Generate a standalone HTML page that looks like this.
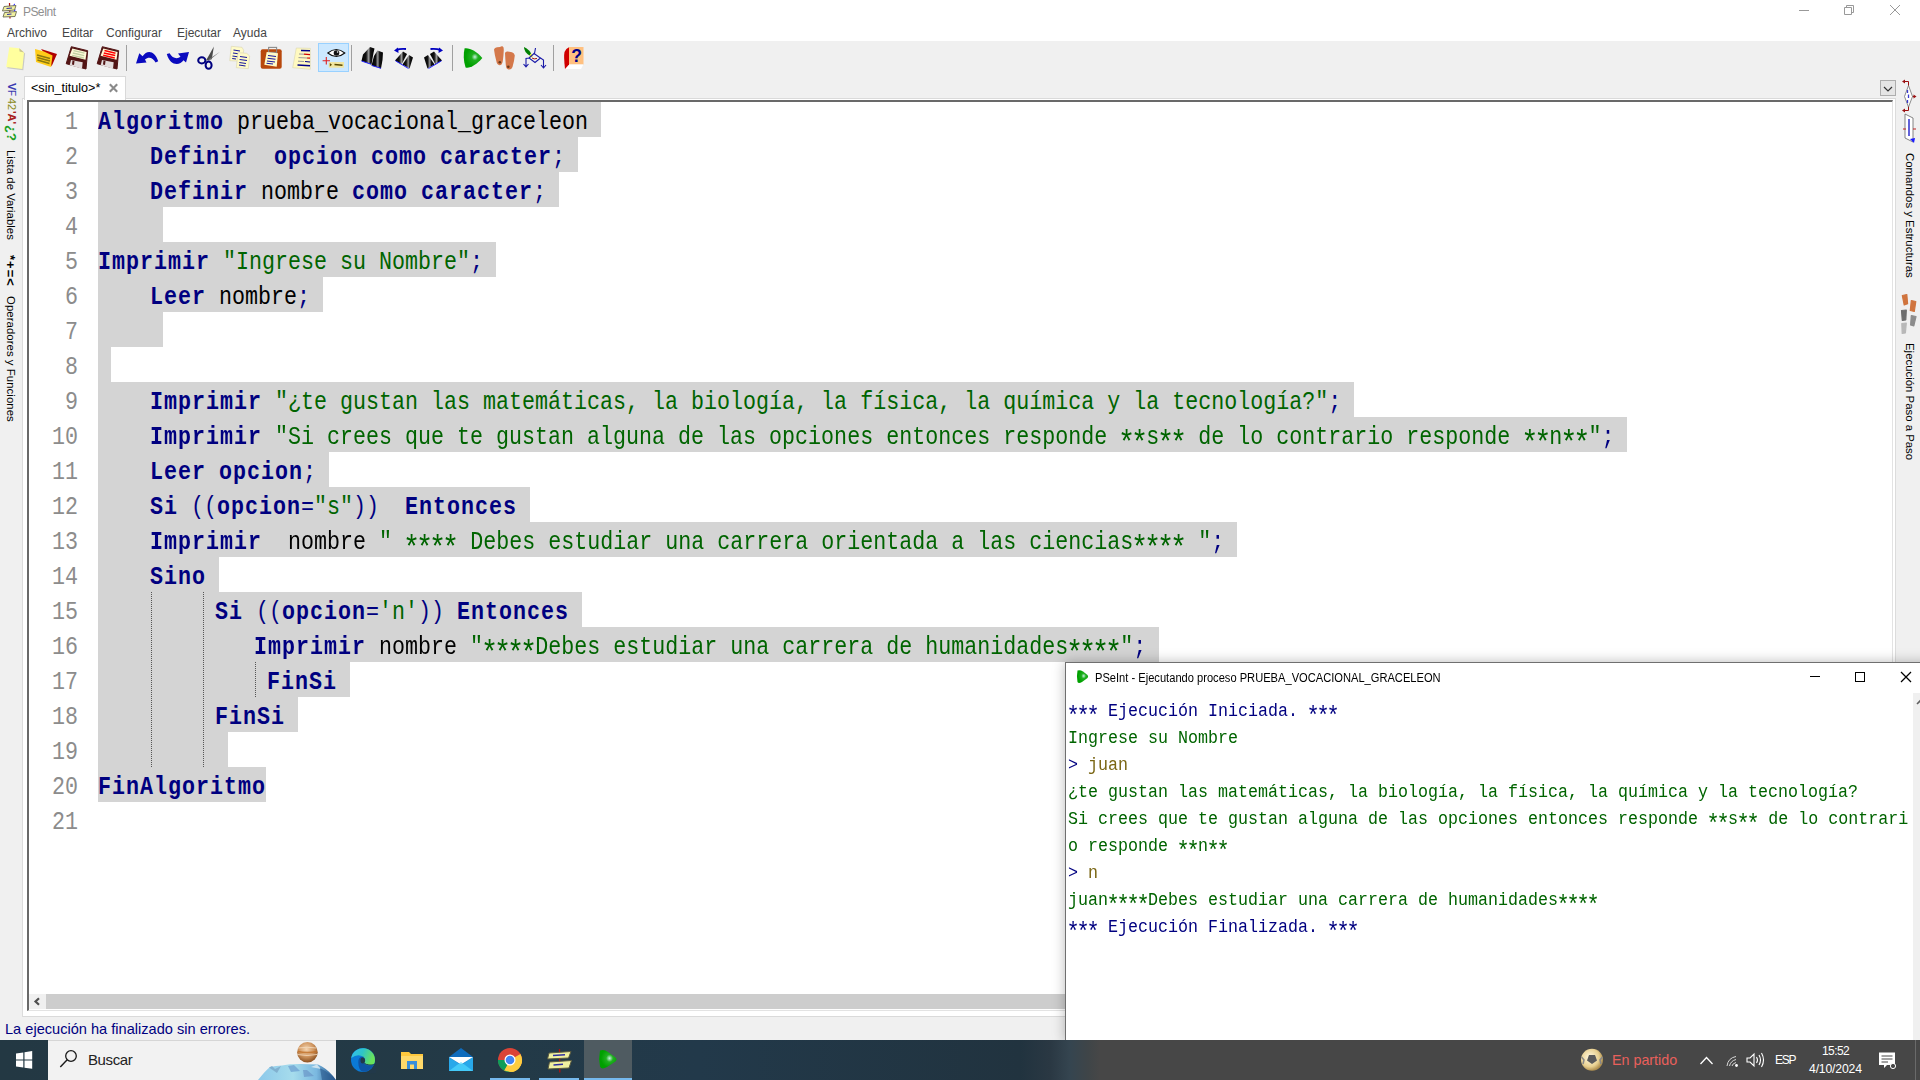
<!DOCTYPE html>
<html><head><meta charset="utf-8"><title>PSeInt</title>
<style>
*{box-sizing:border-box}
html,body{margin:0;padding:0}
body{width:1920px;height:1080px;overflow:hidden;position:relative;background:#f0f0f0;font-family:"Liberation Sans",sans-serif}
.a{position:absolute}
#titlebar{left:0;top:0;width:1920px;height:41px;background:#fff}
.ttl{font-size:12px;color:#8f8f8f;left:23px;top:5px;line-height:14px;letter-spacing:-0.6px}
.menu{font-size:12px;color:#454545;top:26px;line-height:14px}
#toolbar{left:0;top:41px;width:1920px;height:35px;background:#f0f0f0}
.sep{width:1px;height:26px;top:45px;background:#a0a0a0}
/* notebook */
#page{left:22px;top:98px;width:1874px;height:919px;background:#fff;border:1px solid #dadada}
#tab{left:24px;top:76px;width:102px;height:24px;background:#fff;border:1px solid #d9d9d9;border-bottom:none}
#editor{left:27px;top:100px;width:1866px;height:911px;background:#fff;border-top:2px solid #696969;border-left:2px solid #696969;border-right:1px solid #e3e3e3;border-bottom:1px solid #e3e3e3;overflow:hidden}
.sel{position:absolute;left:98px;height:35px;background:#d4d4d4}
.ln{position:absolute;left:29px;width:49px;text-align:right;height:35px;font-family:"Liberation Mono",monospace;font-size:25.0px;line-height:35px;color:#8c8c8c;transform:scaleX(0.86667);transform-origin:right top;padding-top:3px;white-space:pre}
.cl{position:absolute;height:35px;font-family:"Liberation Mono",monospace;font-size:25.0px;line-height:35px;white-space:pre;transform:scaleX(0.86667);transform-origin:left top;padding-top:3px}
.kw{color:#000080;font-weight:bold;letter-spacing:1.1538px}
.id{color:#000}
.st{color:#006400}
.op{color:#000080}
.vt{position:absolute;writing-mode:vertical-rl;white-space:nowrap;line-height:14px;font-family:"Liberation Sans",sans-serif}
.ast{font-size:33px;letter-spacing:-4.8px;position:relative;top:8.8px;left:-2.5px;line-height:0}
.cast{font-size:25px;letter-spacing:-3.6px;position:relative;top:7.8px;left:-1.8px;line-height:0}
.guide{position:absolute;width:1px;background:repeating-linear-gradient(to bottom,#555 0,#555 1px,transparent 1px,transparent 2px)}
/* console */
#con{left:1065px;top:662px;width:870px;height:380px;background:#fff;border:1px solid #6f6f6f;box-shadow:0 0 12px rgba(0,0,0,.28)}
.cn{position:absolute;left:1067.6px;height:27px;font-family:"Liberation Mono",monospace;font-size:19.0px;line-height:27px;white-space:pre;transform:scaleX(0.87719);transform-origin:left top}
#taskbar{left:0;top:1040px;width:1920px;height:40px;background:linear-gradient(to right,#233843 0,#233a47 500px,#22394a 700px,#21333f 1020px,#2a3843 1050px,#354550 1070px,#3f4548 1088px,#474747 1100px,#474747 100%)}
</style></head><body>
<div id="titlebar" class="a"></div>
<div class="a ttl">PSeInt</div>
<div class="a menu" style="left:7px">Archivo</div>
<div class="a menu" style="left:62px">Editar</div>
<div class="a menu" style="left:106px">Configurar</div>
<div class="a menu" style="left:177px">Ejecutar</div>
<div class="a menu" style="left:233px">Ayuda</div>
<div id="toolbar" class="a"></div>
<svg class="a" style="left:0;top:0" width="600" height="80" viewBox="0 0 600 80">
<defs>
 <linearGradient id="tube" x1="0" y1="0" x2="1" y2="0">
  <stop offset="0" stop-color="#000"/><stop offset=".35" stop-color="#111"/><stop offset=".55" stop-color="#9a9a9a"/><stop offset=".7" stop-color="#151515"/><stop offset="1" stop-color="#000"/>
 </linearGradient>
 <radialGradient id="runhl" cx=".6" cy=".45" r=".5">
  <stop offset="0" stop-color="#c8f0e0"/><stop offset=".35" stop-color="#20b020"/><stop offset="1" stop-color="#00a000"/>
 </radialGradient>
</defs>
<!-- new -->
<path d="M9.6,47.6 L19.6,48.4 L24.4,52.6 L22.6,69.4 L6.6,67.4 Z" fill="#a9a9a0" transform="translate(0.7,0.8)" opacity=".55"/>
<path d="M9.3,47.2 L19.2,48.2 L24,52.5 L22.3,69 L6.2,67 Z" fill="#ffff9e"/>
<path d="M19.2,48.2 L24,52.5 L19.6,51.6 Z" fill="#c9c393"/>
<!-- open -->
<path d="M41,49 L57,54 L51.5,66.5 L50,60 Z" fill="#b00000"/>
<path d="M35,49 L44,51.5 L52.5,55.5 L51,67 L36,62 Z" fill="#ffcc1a"/>
<path d="M37,55 L50,58.5 M37.2,57.5 L50,61 M37.4,60 L49.5,63.5" stroke="#8c7a10" stroke-width="1.6"/>
<!-- save -->
<g id="disk">
<path d="M71.3,46.7 L87.7,50.7 L86,69 L66.2,63.7 Z" fill="#521414" stroke="#521414" stroke-width="1" stroke-linejoin="round"/>
<path d="M72.3,48.6 L86.6,52 L85.5,59.8 L69.6,55.8 Z" fill="#fff9d8"/>
<path d="M71,60 L82.7,62.3 L82,68.7 L69.7,65.3 Z" fill="#e3dcdc"/>
<path d="M72.5,60.6 L74.5,61 L74,65 L72,64.5 Z" fill="#521414"/>
</g>
<path d="M73.5,50.6 L84.5,53.2 M72.8,53 L84.2,55.6 M72.2,55.3 L83.8,58" stroke="#c2cfa2" stroke-width="1.3"/>
<use href="#disk" x="31"/>
<path d="M104.5,50.6 L115.5,53.2 M103.8,53 L115.2,55.6 M103.2,55.3 L114.8,58" stroke="#ff0000" stroke-width="1.5"/>
<!-- sep handled in html -->
<!-- undo -->
<path d="M136,63.5 L139.3,53.3 L142.6,56.3 C147,49.8 154.5,50.3 158.2,61.2 L155.6,62.6 C152.8,57.3 148.5,56.3 145,59.6 L146.5,62.5 Z" fill="#0a0abf"/>
<!-- redo -->
<path d="M166.8,54 L169.6,53.2 C172,58 177,59.5 180.5,56.8 L178,53.5 L189,52 L186,62.5 L183.5,60.2 C179.5,66.2 170,65.8 166.8,54 Z" fill="#0a0abf"/>
<!-- scissors -->
<path d="M206,60.5 L213.9,46.6 L211.8,59.2 Z" fill="#4a4a4a"/>
<path d="M207.5,61.8 L220,51.8 L209.5,58.8 Z" fill="#707070"/>
<ellipse cx="201.8" cy="60.4" rx="3.6" ry="3.1" fill="none" stroke="#000080" stroke-width="2"/>
<ellipse cx="208.6" cy="65.2" rx="3" ry="3.6" fill="none" stroke="#000080" stroke-width="2"/>
<!-- copy -->
<path d="M231.3,46.3 L242,47.3 L243.7,50.3 L241.7,61.3 L229.7,60.7 Z" fill="#fffbc8" stroke="#d8d4b0" stroke-width=".6"/>
<path d="M233.5,50 L240,51 M233,53 L240,54 M232.5,56 L239,57 M232.2,58.5 L236,59" stroke="#1a1aa0" stroke-width="1.1"/>
<path d="M238,52.7 L246.7,53.3 L249.7,56 L248.3,68.7 L236.3,67.7 Z" fill="#fffbc8" stroke="#d8d4b0" stroke-width=".6"/>
<path d="M240,56.5 L247,57.5 M239.6,59.5 L247,60.5 M239.3,62.5 L246,63.5 M239,65 L245.5,66" stroke="#1a1aa0" stroke-width="1.1"/>
<!-- paste -->
<rect x="260.7" y="49.3" width="21" height="19.4" rx="2" fill="#b8480c"/>
<rect x="268.6" y="47.4" width="8" height="5" fill="none" stroke="#8a8a8a" stroke-width="1.1"/>
<path d="M266.7,52 L278,53.3 L276.7,66.7 L264.3,64.7 Z" fill="#fffbc8"/>
<path d="M268,55.5 L276,56.5 M267.5,58.3 L275.5,59.3 M267,61 L275,62 M266.5,63.2 L273,64" stroke="#1a1aa0" stroke-width="1.1"/>
<!-- indent/comment doc -->
<path d="M296.3,48 L310.3,48.3 L310.3,69.3 L292.7,67.7 Z" fill="#fff9c0" stroke="#d9d5b0" stroke-width=".6"/>
<path d="M301,50.5 L310,50.8" stroke="#00008a" stroke-width="1.6"/>
<path d="M299,54 L304,54.2" stroke="#999" stroke-width="1"/><path d="M304,54.2 L310,54.6" stroke="#cc0000" stroke-width="1.2"/>
<path d="M298.5,57.6 L307,58" stroke="#999" stroke-width="1"/><path d="M307,58 L310,58.2" stroke="#cc0000" stroke-width="1.2"/>
<path d="M298,61.2 L304,61.5" stroke="#999" stroke-width="1"/><path d="M305,61.5 L310,62" stroke="#00008a" stroke-width="1.2"/>
<path d="M297.5,65 L310,65.8" stroke="#00008a" stroke-width="1.6"/>
<!-- highlighted button -->
<rect x="318.5" y="43.5" width="30" height="28" fill="#cce8ff" stroke="#99d1ff" stroke-width="1"/>
<path d="M327.8,53 Q336.3,46 344.8,53 Q336.3,60 327.8,53 Z" fill="#fff" stroke="#111" stroke-width="1.1"/>
<circle cx="336.5" cy="53" r="2.8" fill="#111"/>
<circle cx="337.6" cy="52" r=".8" fill="#fff"/>
<path d="M322.6,60.7 L330,60.7 M326.3,57 L326.3,64.4" stroke="#e02020" stroke-width="1.1"/>
<rect x="328.7" y="62" width="15.3" height="5.7" fill="#f2e6a0"/>
<path d="M329.8,63 L332,64.8 L329.8,66.6 Z" fill="#5a4a00"/>
<path d="M334.5,64.5 L342.5,65.3" stroke="#5a4a00" stroke-width="1.6"/>
<!-- binoculars -->
<path d="M370,47 L374.5,48.5 L373.5,53 L371.5,64.5 L361.5,61 L363,54.5 Z" fill="url(#tube)"/>
<path d="M377.5,50.5 L383,52.5 L382.5,60 L381,68.5 L371.5,65.5 L374,56 Z" fill="url(#tube)"/>
<path d="M361.5,61 L371,64.2 M371.8,65.5 L381,68.3" stroke="#2020ff" stroke-width="1"/>
<!-- find prev -->
<path d="M403,51.5 L407,54 L401.5,64.5 L395,60.5 Z" fill="url(#tube)"/>
<path d="M409,55 L413,57.5 L409.5,68.5 L402.5,64.5 Z" fill="url(#tube)"/>
<path d="M395.5,60.8 L408.5,68.5" stroke="#2020ff" stroke-width="1"/>
<path d="M406,49 Q400,48.5 396.5,50" stroke="#0000c0" stroke-width="2" fill="none"/>
<path d="M394,50.5 L398,47.5 L398.5,53 Z" fill="#0000c0"/>
<!-- find next -->
<path d="M434,51.5 L430,54 L435.5,64.5 L442,60.5 Z" fill="url(#tube)"/>
<path d="M428,55 L424,57.5 L427.5,68.5 L434.5,64.5 Z" fill="url(#tube)"/>
<path d="M441.5,60.8 L428.5,68.5" stroke="#2020ff" stroke-width="1"/>
<path d="M430.5,49 Q436.5,48.5 440.5,50" stroke="#0000c0" stroke-width="2" fill="none"/>
<path d="M443,50.5 L439,47.5 L438.5,53 Z" fill="#0000c0"/>
<!-- run -->
<path d="M464.6,48.3 C469.5,47.5 476.5,51 482.3,58 C476.5,65 469.5,68.6 465.6,67.4 C463.3,61 463.3,54 464.6,48.3 Z" fill="url(#runhl)"/>
<!-- feet -->
<path d="M494,49.5 Q494.5,47.5 497,47.3 L500,47 Q501.5,45.8 502.5,46.3 Q504,47 503.8,50 Q503.5,56 502.8,61 Q502.2,65.3 499.5,65.2 Q497,65 496.3,61 Q494.5,54 494,49.5 Z" fill="#d4784a"/>
<path d="M505,53 Q505.5,51 508,51.5 L512,52.3 Q514.5,53 514.8,55.5 Q514.3,61 512.5,67 Q511.3,70 508.5,69.5 Q506,69 505.8,65 Q505.2,58 505,53 Z" fill="#d4784a"/>
<circle cx="499.8" cy="62.2" r="1.3" fill="#6b3a1a"/><circle cx="508.3" cy="66.7" r="1.3" fill="#6b3a1a"/>
<!-- flow -->
<path d="M524,47 Q530,50 531,53.5 L529.5,55.5 Q524,52 524,47 Z" fill="#008000"/>
<path d="M529.5,55.5 L531.5,53.5 L532.5,57 L530.5,57.5 Z" fill="#f0f000"/>
<path d="M535.5,48 L534.5,53.5 M534,53.5 L540.5,58 L535,62.5 L529,58 Z M529,58 L526,58.5 L526,66.5 M523.5,64 L526,66.8 L528.5,64 M540.5,58 L543.5,60 L543.5,67.5 M541,65 L543.5,68 L546,65" stroke="#1a1aa8" stroke-width="1.1" fill="none"/>
<path d="M532,58 Q534,59.5 537,58.5" stroke="#a01010" stroke-width="1" fill="none"/>
<!-- help -->
<path d="M569,47 L583.5,47 L583.5,64.5 L569,64.5 Z" fill="#ffc080"/>
<path d="M569,64.5 L583.3,64.5 L581,69 L565,69 Z" fill="#fff"/>
<path d="M569,47.3 L569,64.5 L565,69 Q563.5,56 564.5,52 Q566,48.5 569,47.3 Z" fill="#d00000"/>
<text x="576.5" y="62.3" font-family="Liberation Sans" font-weight="bold" font-size="17.5" fill="#00008a" text-anchor="middle">?</text>
</svg>

<div class="a sep" style="left:126px"></div>
<div class="a sep" style="left:351px"></div>
<div class="a sep" style="left:452px"></div>
<div class="a sep" style="left:553px"></div>

<div id="page" class="a"></div>
<div id="tab" class="a"></div>
<div class="a" style="left:31px;top:81px;font-size:12.6px;line-height:14px;color:#000">&lt;sin_titulo&gt;*</div>
<div id="editor" class="a"></div>
<div class="sel" style="top:102px;width:503px"></div>
<div class="sel" style="top:137px;width:480px"></div>
<div class="sel" style="top:172px;width:461px"></div>
<div class="sel" style="top:207px;width:65px"></div>
<div class="sel" style="top:242px;width:398px"></div>
<div class="sel" style="top:277px;width:225px"></div>
<div class="sel" style="top:312px;width:65px"></div>
<div class="sel" style="top:347px;width:13px"></div>
<div class="sel" style="top:382px;width:1256px"></div>
<div class="sel" style="top:417px;width:1529px"></div>
<div class="sel" style="top:452px;width:231px"></div>
<div class="sel" style="top:487px;width:432px"></div>
<div class="sel" style="top:522px;width:1139px"></div>
<div class="sel" style="top:557px;width:121px"></div>
<div class="sel" style="top:592px;width:484px"></div>
<div class="sel" style="top:627px;width:1061px"></div>
<div class="sel" style="top:662px;width:252px"></div>
<div class="sel" style="top:697px;width:200px"></div>
<div class="sel" style="top:732px;width:130px"></div>
<div class="sel" style="top:767px;width:168px"></div>
<div class="ln" style="top:102px">1</div>
<div class="ln" style="top:137px">2</div>
<div class="ln" style="top:172px">3</div>
<div class="ln" style="top:207px">4</div>
<div class="ln" style="top:242px">5</div>
<div class="ln" style="top:277px">6</div>
<div class="ln" style="top:312px">7</div>
<div class="ln" style="top:347px">8</div>
<div class="ln" style="top:382px">9</div>
<div class="ln" style="top:417px">10</div>
<div class="ln" style="top:452px">11</div>
<div class="ln" style="top:487px">12</div>
<div class="ln" style="top:522px">13</div>
<div class="ln" style="top:557px">14</div>
<div class="ln" style="top:592px">15</div>
<div class="ln" style="top:627px">16</div>
<div class="ln" style="top:662px">17</div>
<div class="ln" style="top:697px">18</div>
<div class="ln" style="top:732px">19</div>
<div class="ln" style="top:767px">20</div>
<div class="ln" style="top:802px">21</div>
<div class="cl" style="top:102px;left:98px"><span class="kw">Algoritmo</span><span class="ws"> </span><span class="id">prueba_vocacional_graceleon</span></div>
<div class="cl" style="top:137px;left:150px"><span class="kw">Definir</span><span class="ws">  </span><span class="kw">opcion</span><span class="ws"> </span><span class="kw">como</span><span class="ws"> </span><span class="kw">caracter</span><span class="op">;</span></div>
<div class="cl" style="top:172px;left:150px"><span class="kw">Definir</span><span class="ws"> </span><span class="id">nombre</span><span class="ws"> </span><span class="kw">como</span><span class="ws"> </span><span class="kw">caracter</span><span class="op">;</span></div>
<div class="cl" style="top:242px;left:98px"><span class="kw">Imprimir</span><span class="ws"> </span><span class="st">&quot;Ingrese su Nombre&quot;</span><span class="op">;</span></div>
<div class="cl" style="top:277px;left:150px"><span class="kw">Leer</span><span class="ws"> </span><span class="id">nombre</span><span class="op">;</span></div>
<div class="cl" style="top:382px;left:150px"><span class="kw">Imprimir</span><span class="ws"> </span><span class="st">&quot;¿te gustan las matemáticas, la biología, la física, la química y la tecnología?&quot;</span><span class="op">;</span></div>
<div class="cl" style="top:417px;left:150px"><span class="kw">Imprimir</span><span class="ws"> </span><span class="st">&quot;Si crees que te gustan alguna de las opciones entonces responde <span class="ast">*</span><span class="ast">*</span>s<span class="ast">*</span><span class="ast">*</span> de lo contrario responde <span class="ast">*</span><span class="ast">*</span>n<span class="ast">*</span><span class="ast">*</span>&quot;</span><span class="op">;</span></div>
<div class="cl" style="top:452px;left:150px"><span class="kw">Leer</span><span class="ws"> </span><span class="kw">opcion</span><span class="op">;</span></div>
<div class="cl" style="top:487px;left:150px"><span class="kw">Si</span><span class="ws"> </span><span class="op">((</span><span class="kw">opcion</span><span class="op">=</span><span class="st">&quot;s&quot;</span><span class="op">))</span><span class="ws">  </span><span class="kw">Entonces</span></div>
<div class="cl" style="top:522px;left:150px"><span class="kw">Imprimir</span><span class="ws">  </span><span class="id">nombre</span><span class="ws"> </span><span class="st">&quot; <span class="ast">*</span><span class="ast">*</span><span class="ast">*</span><span class="ast">*</span> Debes estudiar una carrera orientada a las ciencias<span class="ast">*</span><span class="ast">*</span><span class="ast">*</span><span class="ast">*</span> &quot;</span><span class="op">;</span></div>
<div class="cl" style="top:557px;left:150px"><span class="kw">Sino</span></div>
<div class="cl" style="top:592px;left:215px"><span class="kw">Si</span><span class="ws"> </span><span class="op">((</span><span class="kw">opcion</span><span class="op">=</span><span class="st">&#x27;n&#x27;</span><span class="op">))</span><span class="ws"> </span><span class="kw">Entonces</span></div>
<div class="cl" style="top:627px;left:254px"><span class="kw">Imprimir</span><span class="ws"> </span><span class="id">nombre</span><span class="ws"> </span><span class="st">&quot;<span class="ast">*</span><span class="ast">*</span><span class="ast">*</span><span class="ast">*</span>Debes estudiar una carrera de humanidades<span class="ast">*</span><span class="ast">*</span><span class="ast">*</span><span class="ast">*</span>&quot;</span><span class="op">;</span></div>
<div class="cl" style="top:662px;left:267px"><span class="kw">FinSi</span></div>
<div class="cl" style="top:697px;left:215px"><span class="kw">FinSi</span></div>
<div class="cl" style="top:767px;left:98px"><span class="kw">FinAlgoritmo</span></div>
<div class="guide" style="left:151px;top:592px;height:175px"></div>
<div class="guide" style="left:203px;top:592px;height:175px"></div>
<div class="guide" style="left:255px;top:662px;height:35px"></div>

<!-- title icon -->
<svg class="a" style="left:0;top:0" width="22" height="22" viewBox="0 0 22 22">
<path d="M9.5,3 L10,18.5" stroke="#b01010" stroke-width="1.2"/>
<path d="M4,6.5 L16,5.5 L14.5,10 L2.5,11 Z" fill="#f0f0a0" stroke="#6a6a50" stroke-width=".9"/>
<path d="M4.5,12.5 L16.5,11.5 L15,16.5 L3,17 Z" fill="#f0f0a0" stroke="#6a6a50" stroke-width=".9"/>
<path d="M6.5,8.5 L12,8" stroke="#3030a0" stroke-width="1.2"/><path d="M7,14.5 L11.5,14" stroke="#3030a0" stroke-width="1.2"/>
<path d="M13.5,5 L15,4" stroke="#2020ff" stroke-width="1"/><path d="M14,11 L15.5,10" stroke="#2020ff" stroke-width="1"/>
</svg>
<!-- window controls main -->
<svg class="a" style="left:1790px;top:0" width="130" height="22" viewBox="1790 0 130 22">
<path d="M1799,10.5 L1809,10.5" stroke="#999" stroke-width="1"/>
<path d="M1844.5,7.5 h7 v7 h-7 Z M1846.5,7.5 v-2 h7 v7 h-2" fill="none" stroke="#999" stroke-width="1"/>
<path d="M1890,5 L1900,15 M1900,5 L1890,15" stroke="#999" stroke-width="1"/>
</svg>
<!-- tab close -->
<svg class="a" style="left:105px;top:80px" width="16" height="16" viewBox="105 80 16 16">
<path d="M109.8,84.3 L117.2,91.7 M117.2,84.3 L109.8,91.7" stroke="#8a8a8a" stroke-width="2.1"/>
</svg>
<!-- dropdown button -->
<div class="a" style="left:1880px;top:80px;width:16px;height:16px;background:#e5e5e5;border:1px solid #adadad"></div>
<svg class="a" style="left:1880px;top:80px" width="16" height="16" viewBox="0 0 16 16"><path d="M4,7 L8,11 L12,7" stroke="#333" stroke-width="1.2" fill="none"/></svg>
<!-- left sidebar -->
<div class="a" style="left:22px;top:99px;width:1px;height:918px;background:#dcdcdc"></div>
<svg class="a" style="left:0;top:80px" width="22" height="62" viewBox="0 80 22 62">
<text transform="translate(8,83) rotate(90)" font-family="Liberation Sans" font-size="11" font-weight="bold" fill="#3a3ab0">V</text>
<text transform="translate(8,90) rotate(90)" font-family="Liberation Sans" font-size="10" fill="#3a3ab0">F</text>
<text transform="translate(8.3,98) rotate(90)" font-family="Liberation Sans" font-size="11" fill="#8a8a18">42</text>
<text transform="translate(8.3,111) rotate(90)" font-family="Liberation Sans" font-size="11" font-weight="bold" fill="#a82020">'A'</text>
<text transform="translate(7.3,125) rotate(90)" font-family="Liberation Sans" font-size="13" font-weight="bold" fill="#20a020">¿?</text>
</svg>
<div class="a vt" style="left:4px;top:150px;font-size:11.3px;color:#000;letter-spacing:0.05px">Lista de Variables</div>
<div class="a vt" style="left:3px;top:255px;font-size:13px;color:#000;font-weight:bold;letter-spacing:1px">*+=&lt;</div>
<div class="a vt" style="left:4px;top:296px;font-size:11.4px;color:#000;letter-spacing:0.05px">Operadores y Funciones</div>
<!-- right sidebar -->
<div class="a" style="left:1895px;top:99px;width:1px;height:918px;background:#dcdcdc"></div>
<svg class="a" style="left:1896px;top:76px" width="24" height="270" viewBox="1896 76 24 270">
<path d="M1904,81.5 L1908.5,81.5 L1908.5,86 M1908.5,106 L1908.5,110.5 L1904,110.5 M1912,96.5 L1915,96.5" stroke="#9a1010" stroke-width="1" fill="none"/>
<path d="M1902,81.5 L1905,79.5 L1905,83.5 Z" fill="#9a1010"/>
<path d="M1908.5,85.5 L1912.5,96.5 L1908.5,107 L1904.5,96.5 Z" fill="#fff" stroke="#707070" stroke-width=".8"/>
<path d="M1907.5,90 L1907.5,93 M1908.5,94.5 L1908.5,98 M1907.5,100 L1907.5,103" stroke="#3a3ad0" stroke-width="1.3"/>
<path d="M1916.5,96.5 L1913.5,94.5 L1913.5,98.5 Z" fill="#9a1010"/>
<path d="M1902,110.5 L1905,108.5 L1905,112.5 Z" fill="#9a1010"/>
<path d="M1905,114 L1913,118 L1913,142 L1905,138 Z" fill="#fff" stroke="#666" stroke-width=".8"/>
<path d="M1909,119 L1909,136" stroke="#3a3ad0" stroke-width="1.6"/>
<path d="M1910,139 L1914,143 L1915,138 Z" fill="#1a1aff"/>
<path d="M1903,129 L1906,129 M1913,129 L1916,129" stroke="#c02020" stroke-width="1"/>
<!-- feet icon -->
<g stroke-linejoin="round" stroke-width="1.2">
<path d="M1902.3,295.5 L1906.8,294.5 L1907.6,303.8 L1904.2,305 Z" fill="#d0743e" stroke="#d0743e"/>
<path d="M1911.3,300.5 L1915.8,301.5 L1914.3,311.5 L1910.3,310.5 Z" fill="#d0743e" stroke="#d0743e"/>
<path d="M1901.5,310.5 L1906.3,310 L1905.8,319.8 L1902.3,320.5 Z" fill="#6e6e6e" stroke="#6e6e6e"/>
<path d="M1911.3,315.5 L1916,316.5 L1913.8,325.8 L1910.6,325 Z" fill="#8c8c8c" stroke="#8c8c8c"/>
<path d="M1901.8,323.5 L1906.3,323 L1905.4,333 L1902.2,333.5 Z" fill="#b8b8b8" stroke="#b8b8b8"/>
</g>
</svg>
<div class="a vt" style="left:1903px;top:153px;font-size:11.4px;color:#000;letter-spacing:0px">Comandos y Estructuras</div>
<div class="a vt" style="left:1903px;top:343px;font-size:11.4px;color:#000;letter-spacing:0px">Ejecución Paso a Paso</div>
<!-- editor h-scrollbar -->
<div class="a" style="left:29px;top:994px;width:1040px;height:15px;background:#f0f0f0"></div>
<div class="a" style="left:46px;top:994px;width:1030px;height:15px;background:#cdcdcd"></div>
<svg class="a" style="left:29px;top:994px" width="17" height="15" viewBox="0 0 17 15"><path d="M10,4.2 L6.5,7.5 L10,10.8" stroke="#505050" stroke-width="2.2" fill="none"/></svg>
<div class="a" style="left:29px;top:1010px;width:1040px;height:1px;background:#e3e3e3"></div>

<div id="con" class="a"></div>
<div class="a" style="left:1095px;top:671px;font-size:12px;line-height:14px;color:#000;transform:scaleX(0.927);transform-origin:left top;white-space:nowrap">PSeInt - Ejecutando proceso PRUEBA_VOCACIONAL_GRACELEON</div>
<div class="cn" style="top:698px"><span style="color:#000080"><span class="cast">*</span><span class="cast">*</span><span class="cast">*</span> Ejecución Iniciada. <span class="cast">*</span><span class="cast">*</span><span class="cast">*</span></span></div>
<div class="cn" style="top:725px"><span style="color:#006400">Ingrese su Nombre</span></div>
<div class="cn" style="top:752px"><span style="color:#000080">&gt; </span><span style="color:#7a6614">juan</span></div>
<div class="cn" style="top:779px"><span style="color:#006400">¿te gustan las matemáticas, la biología, la física, la química y la tecnología?</span></div>
<div class="cn" style="top:806px"><span style="color:#006400">Si crees que te gustan alguna de las opciones entonces responde <span class="cast">*</span><span class="cast">*</span>s<span class="cast">*</span><span class="cast">*</span> de lo contrari</span></div>
<div class="cn" style="top:833px"><span style="color:#006400">o responde <span class="cast">*</span><span class="cast">*</span>n<span class="cast">*</span><span class="cast">*</span></span></div>
<div class="cn" style="top:860px"><span style="color:#000080">&gt; </span><span style="color:#7a6614">n</span></div>
<div class="cn" style="top:887px"><span style="color:#006400">juan<span class="cast">*</span><span class="cast">*</span><span class="cast">*</span><span class="cast">*</span>Debes estudiar una carrera de humanidades<span class="cast">*</span><span class="cast">*</span><span class="cast">*</span><span class="cast">*</span></span></div>
<div class="cn" style="top:914px"><span style="color:#000080"><span class="cast">*</span><span class="cast">*</span><span class="cast">*</span> Ejecución Finalizada. <span class="cast">*</span><span class="cast">*</span><span class="cast">*</span></span></div>

<div id="taskbar" class="a"></div>
<!-- console title icon & controls -->
<svg class="a" style="left:1070px;top:664px" width="850" height="30" viewBox="1070 664 850 30">
<defs><radialGradient id="runhl2" cx=".6" cy=".45" r=".5"><stop offset="0" stop-color="#c8f0e0"/><stop offset=".4" stop-color="#20b020"/><stop offset="1" stop-color="#00a000"/></radialGradient></defs>
<path d="M1077.5,670.5 Q1080,669.5 1083,671.5 L1087.5,675 Q1088.8,676.5 1087.5,678 L1082,682 Q1078.5,684 1077.5,682 Q1076.3,676.5 1077.5,670.5 Z" fill="url(#runhl2)"/>
<path d="M1810,676.5 L1820,676.5" stroke="#000" stroke-width="1"/>
<rect x="1855.5" y="672.5" width="9" height="9" fill="none" stroke="#000" stroke-width="1"/>
<path d="M1901,672 L1911,682 M1911,672 L1901,682" stroke="#000" stroke-width="1.25"/>
</svg>
<div class="a" style="left:1913px;top:693px;width:7px;height:347px;background:#f0f0f0"></div>
<svg class="a" style="left:1913px;top:693px" width="7" height="20" viewBox="1913 693 7 20"><path d="M1917,704 L1921,700" stroke="#606060" stroke-width="1.6"/></svg>
<!-- taskbar -->
<div class="a" style="left:48px;top:1040px;width:288px;height:40px;background:#f2f2f2;border-top:1px solid #d6d6d6"></div>
<svg class="a" style="left:0;top:1040px" width="1920" height="40" viewBox="0 1040 1920 40">
 <defs>
  <radialGradient id="jup" cx=".45" cy=".35" r=".65"><stop offset="0" stop-color="#f4d4b0"/><stop offset=".55" stop-color="#d09660"/><stop offset="1" stop-color="#8a5020"/></radialGradient>
  <linearGradient id="globe" x1="0" y1="0" x2="1" y2="0"><stop offset="0" stop-color="#8cc8ea"/><stop offset=".45" stop-color="#a6dcec"/><stop offset=".75" stop-color="#7ab8e0"/><stop offset="1" stop-color="#1e4e84"/></linearGradient>
  <linearGradient id="edge" x1="0" y1="0" x2="1" y2="0.3"><stop offset="0" stop-color="#33bff0"/><stop offset=".5" stop-color="#2ec4c8"/><stop offset="1" stop-color="#6ae35a"/></linearGradient>
  <radialGradient id="ball" cx=".4" cy=".4" r=".6"><stop offset="0" stop-color="#fff8e0"/><stop offset=".7" stop-color="#e8d090"/><stop offset="1" stop-color="#b09050"/></radialGradient>
 </defs>
 <!-- start logo -->
 <path d="M16,1053.5 L23.3,1052.4 L23.3,1059.4 L16,1059.4 Z M24.5,1052.2 L32.2,1051 L32.2,1059.4 L24.5,1059.4 Z M16,1060.6 L23.3,1060.6 L23.3,1067.6 L16,1066.6 Z M24.5,1060.6 L32.2,1060.6 L32.2,1068.8 L24.5,1067.8 Z" fill="#fff"/>
 <!-- search icon -->
 <circle cx="71" cy="1056" r="5.3" fill="none" stroke="#1a1a1a" stroke-width="1.3"/>
 <path d="M67.2,1059.8 L60.3,1067" stroke="#1a1a1a" stroke-width="1.4"/>
 <!-- globe & jupiter -->
 <path d="M258,1080 Q266,1070 270,1067 L276,1066 L282,1065.5 L290,1064.2 Q305,1063.6 318,1064.6 Q326,1068 333,1076 L336,1080 Z" fill="url(#globe)"/>
 <path d="M269,1067.5 L272,1066 L275,1069 L281,1066 L277,1073 Z" fill="#7aa8c8" opacity=".8"/>
 <path d="M288,1066 L294,1065 L300,1071 L291,1072 Z" fill="#6a9cd0" opacity=".7"/>
 <path d="M303,1070 L307,1070 L314,1076 L304,1077 Z" fill="#6a96c8" opacity=".7"/>
 <path d="M311,1067 L317,1064.5 L321,1069 Z" fill="#e0eef4" opacity=".8"/>
 <path d="M320,1068 Q330,1073 335,1080 L322,1080 Z" fill="#2c5c90" opacity=".65"/>
 <circle cx="307.4" cy="1052.3" r="10.3" fill="url(#jup)"/>
 <path d="M298,1048 Q307,1046.5 316.5,1048 M297.5,1054.5 Q307,1056.5 317,1054.5" stroke="#f4dcc0" stroke-width="1" fill="none" opacity=".8"/>
 <path d="M298,1051.5 Q307,1053.5 317,1051.5" stroke="#c07028" stroke-width="1.6" fill="none" opacity=".8"/>
 <!-- edge -->
 <circle cx="363" cy="1060" r="12" fill="#0b7ad6"/>
 <path d="M351.2,1058 A12,12 0 0 1 375,1060.5 Q375,1065.3 369.5,1065 Q364.5,1064.5 364.3,1062.5 Q366.3,1059.5 363.5,1057 Q358,1053 351.2,1058 Z" fill="url(#edge)"/>
 <path d="M358.3,1062.5 Q358,1056.3 363.6,1056.8 Q362,1059 362.8,1062 Q365.5,1066.5 373.5,1065.8 Q369.5,1071.8 363,1071.8 Q358.5,1070.5 358.3,1062.5 Z" fill="#0e54a5"/>
 <ellipse cx="362.8" cy="1060.6" rx="2.3" ry="3" fill="#22394a"/>
 <path d="M364.3,1063.3 Q368,1066 375.5,1064.6" stroke="#22394a" stroke-width="1" fill="none"/>
 <path d="M373.3,1066.2 L376,1064.6 L376,1073 L367,1073.5 Q371.5,1070.5 373.3,1066.2 Z" fill="#22394a"/>
 <!-- explorer -->
 <path d="M401,1052 L409,1052 L411,1054 L423,1054 L423,1069 L401,1069 Z" fill="#ffc83d"/>
 <path d="M401,1056 L423,1056 L423,1069 L401,1069 Z" fill="#ffd96a"/>
 <path d="M407,1061 L417,1061 L417,1069 L414,1069 L414,1064.5 L410,1064.5 L410,1069 L407,1069 Z" fill="#3a8fd9"/>
 <!-- mail -->
 <path d="M449,1057 L461,1048 L473,1057 L473,1071 L449,1071 Z" fill="#0f6cbd"/>
 <path d="M449,1057 L461,1065 L473,1057 L473,1071 L449,1071 Z" fill="#28a8ea"/>
 <path d="M449,1057 L473,1057 L461,1064.5 Z" fill="#fff"/>
 <path d="M449,1071 L461,1062 L473,1071 Z" fill="#50d9ff" opacity=".7"/>
 <!-- chrome -->
 <circle cx="510" cy="1060" r="12" fill="#db4437"/>
 <path d="M510,1060 L520.4,1066 A12,12 0 0 1 504,1070.4 Z" fill="#0f9d58"/>
 <path d="M510,1060 L498,1060 A12,12 0 0 0 504,1070.4 Z" fill="#0f9d58"/>
 <path d="M510,1060 L522,1060 A12,12 0 0 1 510,1072 L504,1070.4 Z" fill="#ffcd40"/>
 <path d="M510,1060 L498,1060 A12,12 0 0 0 510,1072 L504,1070.4 Z" fill="#0f9d58"/>
 <path d="M510,1060 L520.4,1054 A12,12 0 0 1 510,1072 L520.4,1066 Z" fill="#ffcd40"/>
 <circle cx="510" cy="1060" r="5.5" fill="#fff"/><circle cx="510" cy="1060" r="4.3" fill="#4285f4"/>
 <!-- pseint -->
 <path d="M559.5,1049 L559.8,1072.5" stroke="#b01010" stroke-width="1.3"/>
 <path d="M549,1053 L571,1051.5 L568.5,1058 L547.5,1059 Z" fill="#f0f0a0" stroke="#5a5a40" stroke-width="1"/>
 <path d="M549.5,1062 L571.5,1060.5 L569,1068 L548,1069 Z" fill="#f0f0a0" stroke="#5a5a40" stroke-width="1"/>
 <path d="M553,1055.5 L565,1054.8 M553.5,1065 L563,1064.3" stroke="#3030a0" stroke-width="1.4"/>
 <!-- active green -->
 <rect x="584" y="1040" width="48" height="40" fill="#4f5b61"/>
 <path d="M600,1050.5 Q604,1049 608,1052 L615.5,1057.5 Q617.5,1059.5 615.5,1061.5 L607,1067 Q601.5,1070 600,1066.5 Q598.3,1058.5 600,1050.5 Z" fill="url(#runhl2)"/>
 <!-- indicators -->
 <rect x="490" y="1078" width="40" height="2" fill="#76b9ed"/>
 <rect x="539" y="1078" width="40" height="2" fill="#76b9ed"/>
 <rect x="584" y="1078" width="48" height="2" fill="#76b9ed"/>
 <!-- soccer ball -->
 <circle cx="1592" cy="1059.7" r="11" fill="url(#ball)"/>
 <path d="M1589,1055 L1595,1055 L1597,1060.5 L1592,1064 L1587,1060.5 Z" fill="#5a5a5a"/>
 <path d="M1581.5,1057 L1584,1060 L1583,1064 M1602.5,1057 L1600,1060 L1601,1064" stroke="#888" stroke-width="1.5" fill="none"/>
 <!-- tray chevron -->
 <path d="M1700.5,1064 L1706.5,1057.5 L1712.5,1064" stroke="#fff" stroke-width="1.3" fill="none"/>
 <!-- wifi -->
 <path d="M1727,1066 Q1728,1058 1736,1056.5 M1729.5,1066 Q1730.5,1061 1736,1059.5 M1732,1066 Q1732.5,1063.5 1736,1062.5" stroke="#d8d8d8" stroke-width="1" fill="none"/>
 <circle cx="1736.5" cy="1065.5" r="1.4" fill="#fff"/>
 <!-- volume -->
 <path d="M1747,1058 L1750,1058 L1754,1054 L1754,1066 L1750,1062 L1747,1062 Z" fill="none" stroke="#fff" stroke-width="1.1"/>
 <path d="M1756.5,1057 Q1758.5,1060 1756.5,1063 M1759,1055 Q1762,1060 1759,1065 M1761.5,1053 Q1765.5,1060 1761.5,1067" stroke="#fff" stroke-width="1.1" fill="none"/>
 <!-- notification -->
 <path d="M1879,1052.5 L1895,1052.5 L1895,1065 L1887,1065 L1884,1068 L1884,1065 L1879,1065 Z" fill="#fff"/>
 <path d="M1881.5,1056 L1892.5,1056 M1881.5,1059 L1892.5,1059 M1881.5,1062 L1888,1062" stroke="#474747" stroke-width="1"/>
 <circle cx="1893" cy="1066" r="2.6" fill="#474747" stroke="#fff" stroke-width="1"/>
 <path d="M1915.5,1040 L1915.5,1080" stroke="#6a6a6a" stroke-width="1"/>
</svg>
<div class="a" style="left:88px;top:1051px;font-size:15px;line-height:18px;color:#222;letter-spacing:-0.4px">Buscar</div>
<div class="a" style="left:1612px;top:1051px;font-size:14.3px;line-height:18px;color:#e9605c">En partido</div>
<div class="a" style="left:1775px;top:1052px;font-size:12px;line-height:16px;color:#fff;letter-spacing:-1.2px">ESP</div>
<div class="a" style="left:1822px;top:1044px;font-size:12px;line-height:15px;color:#fff;letter-spacing:-0.6px">15:52</div>
<div class="a" style="left:1809px;top:1062px;font-size:12.2px;line-height:15px;color:#fff;letter-spacing:-0.15px">4/10/2024</div>

<div class="a" style="left:5px;top:1021px;font-size:14.6px;line-height:16px;color:#000080">La ejecución ha finalizado sin errores.</div>
</body></html>
